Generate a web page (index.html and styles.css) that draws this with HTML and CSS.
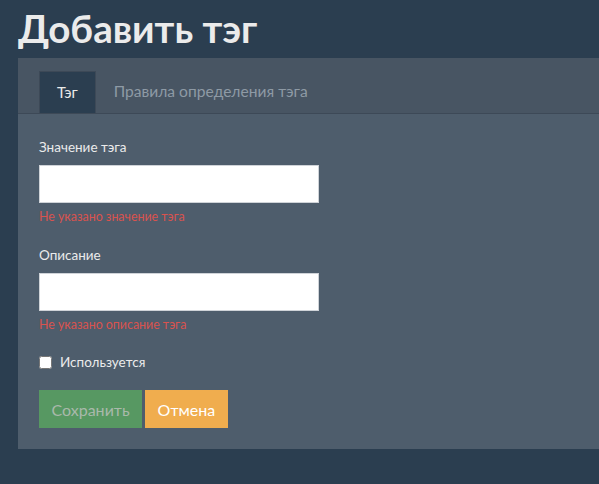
FILE: index.html
```html
<!DOCTYPE html>
<html lang="ru">
<head>
    <meta charset="UTF-8">
    <meta name="viewport" content="width=device-width, initial-scale=1.0">
    <title>Добавить тэг</title>
    <link rel="stylesheet" href="styles.css">
</head>
<body>
    <h1 class="title">Добавить тэг</h1>
    <div class="panel">
        <ul class="tabs">
            <li class="tab active">Тэг</li>
            <li class="tab">Правила определения тэга</li>
        </ul>
        <form class="form">
            <div class="field">
                <label class="label">Значение тэга</label>
                <input class="input" type="text">
                <div class="error">Не указано значение тэга</div>
            </div>
            <div class="field">
                <label class="label">Описание</label>
                <input class="input" type="text">
                <div class="error">Не указано описание тэга</div>
            </div>
            <label class="check">
                <input type="checkbox">
                <span>Используется</span>
            </label>
            <div class="buttons">
                <button type="button" class="btn btn-save">Сохранить</button>
                <button type="button" class="btn btn-cancel">Отмена</button>
            </div>
        </form>
    </div>
</body>
</html>
```

FILE: styles.css
```css
body {
    margin: 0;
    background: #2b3e50;
    font-family: Lato, "Open Sans", "Noto Sans", sans-serif;
    color: #ebebeb;
    overflow: hidden;
}
.title {
    margin: 0;
    padding: 6px 0 0 18px;
    height: 52px;
    font-size: 38.6px;
    font-weight: 700;
    line-height: 44px;
    color: #ebebeb;
}
.panel {
    margin-left: 18px;
    width: 600px;
    background: #4e5d6c;
    padding-bottom: 21px;
}
.tabs {
    display: flex;
    margin: 0;
    padding: 13px 0 0 21px;
    list-style: none;
    background: #485563;
    border-bottom: 1px solid #3d4957;
}
.tab {
    padding: 0 18px;
    height: 41px;
    line-height: 41px;
    font-size: 15.6px;
    color: #8e9aa5;
}
.tab.active {
    background: #2b3e50;
    color: #ebebeb;
    border: 1px solid #3d4957;
    border-bottom: none;
    padding: 0 17px;
    font-size: 15px;
}
.form {
    padding: 24px 21px 0;
}
.field {
    margin-bottom: 21px;
}
.label {
    display: block;
    font-size: 13.5px;
    line-height: 18px;
    margin-bottom: 9px;
}
.input {
    display: block;
    box-sizing: border-box;
    width: 280px;
    height: 38px;
    margin: 0;
    border: 1px solid #cfd3d8;
    background: #fff;
}
.error {
    margin-top: 5px;
    font-size: 12.4px;
    line-height: 17px;
    color: #d9534f;
}
.check {
    display: flex;
    align-items: center;
    gap: 8px;
    font-size: 13.5px;
    margin-top: 7px;
}
.check input {
    margin: 0;
    width: 13px;
    height: 13px;
}
.buttons {
    display: flex;
    gap: 3px;
    margin-top: 20px;
}
.btn {
    height: 38px;
    border: none;
    padding: 0 12.5px;
    font-family: inherit;
    font-size: 16px;
}
.btn-save {
    background: #579862;
    color: #a9b9ab;
}
.btn-cancel {
    background: #f0ad4e;
    color: #fff;
}
```
